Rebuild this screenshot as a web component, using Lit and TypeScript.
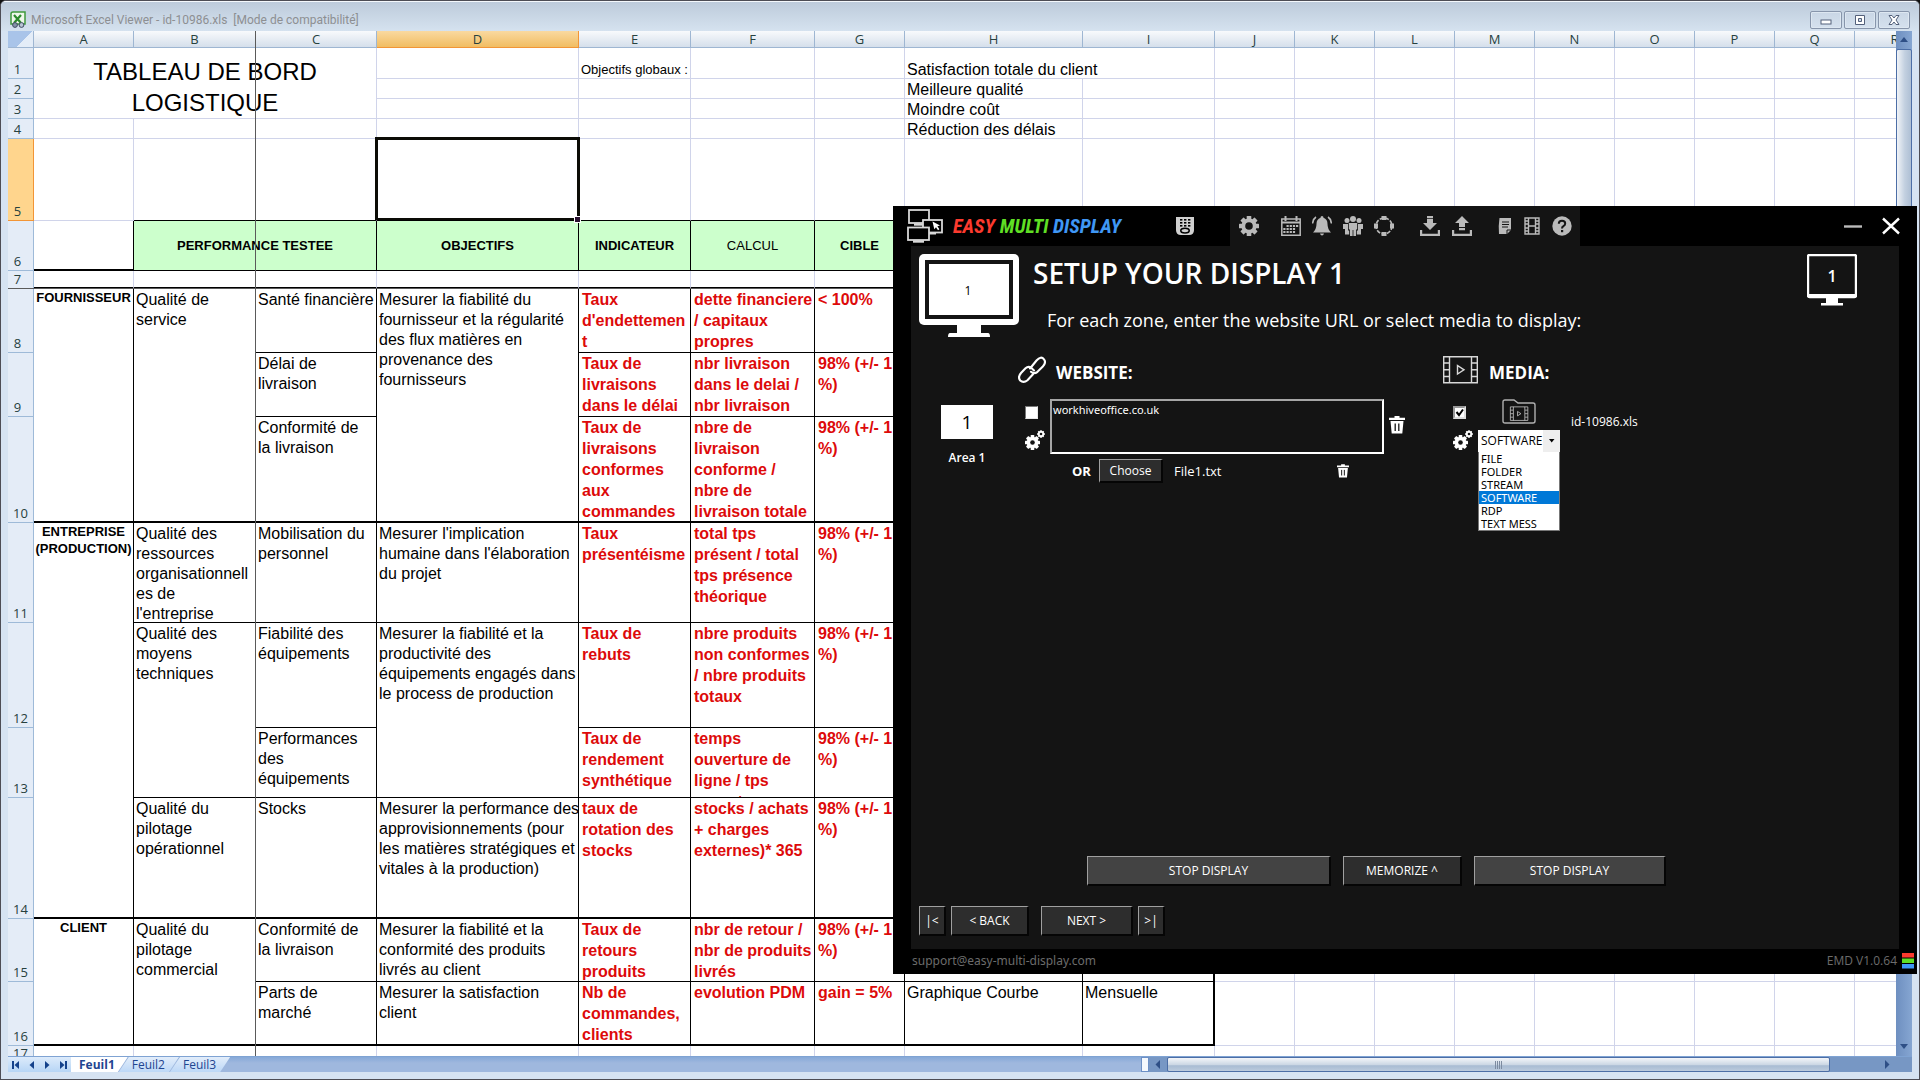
import { LitElement, html, css, svg, nothing, TemplateResult } from "lit";
import { customElement, state } from "lit/decorators.js";
import { classMap } from "lit/directives/class-map.js";
import { styleMap } from "lit/directives/style-map.js";

/* ---------- Workbook data ---------- */

interface Cell {
  t?: string;
  k?: string;
  cs?: number;
  rs?: number;
}
interface Row {
  h: number;
  cells: Cell[];
}

const COLUMNS: [string, number][] = [
  ["A", 100], ["B", 122], ["C", 121], ["D", 202], ["E", 112], ["F", 124], ["G", 90], ["H", 178], ["I", 132],
  ["J", 80], ["K", 80], ["L", 80], ["M", 80], ["N", 80], ["O", 80], ["P", 80], ["Q", 80], ["R", 80],
];

const blank = (n: number, k = ""): Cell[] => Array.from({ length: n }, () => ({ k }));
const tail = blank(9);
const TARGET = "98% (+/- 1\n%)";

const ROWS: Row[] = [
  { h: 31, cells: [{ t: "TABLEAU DE BORD\nLOGISTIQUE", k: "title", cs: 3, rs: 3 }, {}, { t: "Objectifs globaux :", k: "low small" }, {}, {}, { t: "Satisfaction totale du client", k: "low", cs: 2 }, ...tail] },
  { h: 20, cells: [...blank(4), { t: "Meilleure qualité", k: "low" }, {}, ...tail] },
  { h: 20, cells: [...blank(4), { t: "Moindre coût", k: "low" }, {}, ...tail] },
  { h: 20, cells: [...blank(7), { t: "Réduction des délais", k: "low" }, {}, ...tail] },
  { h: 82, cells: [{}, ...blank(2, "kb"), { k: "kb active" }, ...blank(5, "kb"), ...tail] },
  { h: 50, cells: [{ k: "kr thick" }, { t: "PERFORMANCE TESTEE", k: "head", cs: 2 }, { t: "OBJECTIFS", k: "head" }, { t: "INDICATEUR", k: "head" }, { t: "CALCUL", k: "head light" }, { t: "CIBLE", k: "head" }, { k: "head" }, { k: "head" }, ...tail] },
  { h: 18, cells: [...blank(9, "thick"), ...tail] },
  { h: 64, cells: [{ t: "FOURNISSEUR", k: "k actor thick", rs: 3 }, { t: "Qualité de\nservice", k: "k thick", rs: 3 }, { t: "Santé financière", k: "k" }, { t: "Mesurer la fiabilité du\nfournisseur et la régularité\ndes flux matières en\nprovenance des\nfournisseurs", k: "k thick", rs: 3 }, { t: "Taux\nd'endettemen\nt", k: "k red" }, { t: "dette financiere\n/ capitaux\npropres", k: "k red" }, { t: "< 100%", k: "k red" }, { k: "k" }, { k: "k edge" }, ...tail] },
  { h: 64, cells: [{ t: "Délai de\nlivraison", k: "k" }, { t: "Taux de\nlivraisons\ndans le délai", k: "k red" }, { t: "nbr livraison\ndans le delai /\nnbr livraison", k: "k red" }, { t: TARGET, k: "k red" }, { k: "k" }, { k: "k edge" }, ...tail] },
  { h: 106, cells: [{ t: "Conformité de\nla livraison", k: "k thick" }, { t: "Taux de\nlivraisons\nconformes\naux\ncommandes", k: "k thick red" }, { t: "nbre de\nlivraison\nconforme /\nnbre de\nlivraison totale", k: "k thick red" }, { t: TARGET, k: "k thick red" }, { k: "k thick" }, { k: "k thick edge" }, ...tail] },
  { h: 100, cells: [{ t: "ENTREPRISE\n(PRODUCTION)", k: "k actor thick", rs: 4 }, { t: "Qualité des\nressources\norganisationnell\nes de\nl'entreprise", k: "k" }, { t: "Mobilisation du\npersonnel", k: "k" }, { t: "Mesurer l'implication\nhumaine dans l'élaboration\ndu projet", k: "k" }, { t: "Taux\nprésentéisme", k: "k red" }, { t: "total tps\nprésent / total\ntps présence\nthéorique", k: "k red" }, { t: TARGET, k: "k red" }, { k: "k" }, { k: "k edge" }, ...tail] },
  { h: 105, cells: [{ t: "Qualité des\nmoyens\ntechniques", k: "k", rs: 2 }, { t: "Fiabilité des\néquipements", k: "k" }, { t: "Mesurer la fiabilité et la\nproductivité des\néquipements engagés dans\nle process de production", k: "k", rs: 2 }, { t: "Taux de\nrebuts", k: "k red" }, { t: "nbre produits\nnon conformes\n/ nbre produits\ntotaux", k: "k red" }, { t: TARGET, k: "k red" }, { k: "k" }, { k: "k edge" }, ...tail] },
  { h: 70, cells: [{ t: "Performances\ndes\néquipements", k: "k" }, { t: "Taux de\nrendement\nsynthétique", k: "k red" }, { t: "temps\nouverture de\nligne / tps\nouverture", k: "k red" }, { t: TARGET, k: "k red" }, { k: "k" }, { k: "k edge" }, ...tail] },
  { h: 121, cells: [{ t: "Qualité du\npilotage\nopérationnel", k: "k thick" }, { t: "Stocks", k: "k thick" }, { t: "Mesurer la performance des\napprovisionnements (pour\nles matières stratégiques et\nvitales à la production)", k: "k thick" }, { t: "taux de\nrotation des\nstocks", k: "k thick red" }, { t: "stocks / achats\n+ charges\nexternes)* 365", k: "k thick red" }, { t: TARGET, k: "k thick red" }, { k: "k thick" }, { k: "k thick edge" }, ...tail] },
  { h: 63, cells: [{ t: "CLIENT", k: "k actor thick", rs: 2 }, { t: "Qualité du\npilotage\ncommercial", k: "k thick", rs: 2 }, { t: "Conformité de\nla livraison", k: "k" }, { t: "Mesurer la fiabilité et la\nconformité des produits\nlivrés au client", k: "k" }, { t: "Taux de\nretours\nproduits", k: "k red" }, { t: "nbr de retour /\nnbr de produits\nlivrés", k: "k red" }, { t: TARGET, k: "k red" }, { k: "k" }, { k: "k edge" }, ...tail] },
  { h: 64, cells: [{ t: "Parts de\nmarché", k: "k thick" }, { t: "Mesurer la satisfaction\nclient", k: "k thick" }, { t: "Nb de\ncommandes,\nclients", k: "k thick red" }, { t: "evolution PDM", k: "k thick red" }, { t: "gain = 5%", k: "k thick red" }, { t: "Graphique Courbe", k: "k thick" }, { t: "Mensuelle", k: "k thick edge" }, ...tail] },
  { h: 17, cells: [...blank(9), ...tail] },
];

/* ---------- Icons ---------- */

const teeth = (cx: number, cy: number, r: number, w: number, n: number) =>
  Array.from({ length: n }, (_, i) => svg`<rect x=${cx - w / 2} y=${cy - r} width=${w} height=${r} rx="0.6" transform="rotate(${(i * 360) / n} ${cx} ${cy})"/>`);

const gear = (hole: string) => svg`
  <g fill="currentColor">${teeth(10, 10, 10, 4.6, 8)}<circle cx="10" cy="10" r="7.6"/></g>
  <circle cx="10" cy="10" r="3.8" fill=${hole}/>`;

const icon = (w: number, h: number, body: unknown) =>
  html`<svg width=${w} height=${h} viewBox="0 0 ${w} ${h}" aria-hidden="true">${body}</svg>`;

const remote = icon(20, 20, svg`
  <path d="M1 1h18v13q0 5-5 5H6q-5 0-5-5z" fill="#d0d0d0"/>
  <g fill="#000"><rect x="5" y="3" width="2.4" height="1.6"/><rect x="9" y="3" width="2.4" height="1.6"/><rect x="13" y="3" width="2.4" height="1.6"/>
  <rect x="5" y="6" width="2.4" height="1.6"/><rect x="9" y="6" width="2.4" height="1.6"/><rect x="13" y="6" width="2.4" height="1.6"/>
  <rect x="5" y="9" width="2.4" height="1.6"/><rect x="9" y="9" width="2.4" height="1.6"/><rect x="13" y="9" width="2.4" height="1.6"/></g>
  <ellipse cx="10" cy="14.6" rx="4.2" ry="2.4" fill="#d0d0d0" stroke="#000" stroke-width="1.6"/>`);

const calendar = icon(20, 20, svg`
  <path d="M0.8 3h18.4v16.2H0.8z" fill="none" stroke="currentColor" stroke-width="1.5"/>
  <path d="M0.8 6.5h18.4" stroke="currentColor" stroke-width="2"/>
  <path d="M4.5 0v5M15.5 0v5" stroke="currentColor" stroke-width="2"/>
  <g fill="currentColor">${[[6.5, 9], [9.7, 9], [12.9, 9], [16, 9], [3.3, 12], [6.5, 12], [9.7, 12], [12.9, 12], [3.3, 15], [6.5, 15], [9.7, 15], [12.9, 15]].map(([x, y]) => svg`<rect x=${x - 1} y=${y} width="2.2" height="2"/>`)}</g>`);

const bell = icon(20, 20, svg`
  <path d="M10 0q1.500 0 1.500 1.700Q15.500 3 15.500 8q0 5 3.500 8.500H1Q4.500 13 4.500 8q0-5 4-6.300Q8.500 0 10 0z" fill="currentColor"/>
  <path d="M8 17.500h4q-.5 2-2 2t-2-2z" fill="currentColor"/>
  <path d="M4 1Q.9 3 .6 7.500M16 1q3.100 2 3.400 6.500" fill="none" stroke="currentColor" stroke-width="1.500"/>`);

const people = icon(20, 20, svg`
  <g fill="currentColor"><circle cx="10" cy="3" r="3"/><circle cx="4" cy="4.500" r="2.500"/><circle cx="16" cy="4.500" r="2.500"/>
  <path d="M5.800 7h8.400v6.500h-1.200V20h-2.600v-6h-.8v6H7v-6.500H5.800z"/>
  <path d="M0 8h5v6.500h1.200V18.500H2V13H0zM20 8h-5v6.500h-1.200v4H18V13h2z"/></g>`);

const ring = icon(20, 20, svg`
  <circle cx="10" cy="10" r="8" fill="none" stroke="currentColor" stroke-width="1.600" stroke-dasharray="4 1.500"/>
  <g fill="currentColor"><rect x="7.500" y="0" width="5" height="4"/><rect x="7.500" y="16" width="5" height="4"/><rect x="0" y="7.500" width="4" height="5"/><rect x="16" y="7.500" width="4" height="5"/></g>`);

const download = icon(20, 20, svg`<path d="M7 0h6v2.200H7zM7 3h6v4h4l-7 7-7-7h4zM0 14h2.200v3.800h15.600V14H20v6H0z" fill="currentColor"/>`);
const upload = icon(20, 20, svg`<path d="M10 0l7 7h-4v4H7V7H3zM7 12h6v2.200H7zM0 14h2.200v3.800h15.600V14H20v6H0z" fill="currentColor"/>`);
const note = icon(14, 18, svg`<path d="M1.500 1H13v12l-4 4H1q-.8-8 .5-16z" fill="currentColor"/><path d="M4 5h7M4 7.500h7M4 10h6M9 17v-4h4" stroke="#141414" stroke-width="1" fill="none"/>`);
const film = icon(16, 18, svg`
  <path d="M1 1h14v16H1zM4.500 1v16M11.500 1v16M4.500 9h7" fill="none" stroke="currentColor" stroke-width="1.400"/>
  <path d="M1 4h3.500M1 7h3.500M1 11h3.500M1 14h3.500M11.500 4H15M11.500 7H15M11.500 11H15M11.500 14H15" stroke="currentColor" stroke-width="1.600"/>`);
const help = icon(20, 20, svg`
  <circle cx="10" cy="10" r="9.700" fill="currentColor"/>
  <path d="M6.800 7.800Q6.800 4.800 10 4.800t3.200 2.700q0 1.600-1.800 2.700Q10 11 10 12.600" fill="none" stroke="#141414" stroke-width="2"/>
  <rect x="9" y="14" width="2.200" height="2.200" fill="#141414"/>`);

const logoMark = icon(36, 34, svg`
  <g fill="#000" stroke="#d8d8d8" stroke-width="1.800">
    <rect x="2" y="1" width="20" height="13"/><path d="M7 15.500h9" stroke-width="2.400"/>
    <rect x="16" y="11" width="19" height="12.500"/><path d="M22 24.500h7" stroke-width="2"/>
    <rect x="1" y="18.500" width="21" height="12.500"/><path d="M6 32.500h11" stroke-width="2.400"/>
  </g>
  <path d="M25.500 12.500l7.500 4-2.600.8 2 3-1.400.9-2-3-1.700 2z" fill="#fff"/>`);

const bigMonitor = svg`
  <rect width="100" height="71" rx="5" fill="#fff"/><rect x="6" y="6" width="88" height="59" fill="#141414"/>
  <rect x="10" y="10" width="80" height="51" fill="#fff"/>
  <path d="M38 71h24v8h7q2 0 2 4H29q0-4 2-4h7z" fill="#fff"/>`;
const smallMonitor = svg`
  <rect x="1" y="1" width="48" height="42" rx="1.500" fill="none" stroke="#fff" stroke-width="2.400"/>
  <path d="M1 40h48v3.500H1zM19 43h12v6h5v2.500H14V49h5z" fill="#fff"/>`;

const link = icon(28, 28, svg`
  <g fill="none" stroke="#fff" stroke-width="2.100" stroke-linecap="round">
    <path d="M12 12.500l6.500-8q4.500-5 7.500-1.200 2.500 3.200-1.200 7.200l-5.300 5.300q-3.500 2.700-6.500 0"/>
    <path d="M16 14.500l-3-3q-3-1.500-5.500.8L3 17q-3.500 4-.8 7.500 3.300 3 7.300-.3l5.500-6"/>
  </g>`);

const gears = icon(20, 20, svg`
  <g fill="#fff">${teeth(7.500, 12.500, 7.500, 3.600, 8)}<circle cx="7.500" cy="12.500" r="5.800"/>${teeth(16, 4, 3.800, 2, 8)}<circle cx="16" cy="4" r="2.800"/></g>
  <circle cx="7.500" cy="12.500" r="2.300" fill="#141414"/><circle cx="16" cy="4" r="1.300" fill="#141414"/>`);

const trashShape = svg`<path d="M5.500 0h5v1.800H16V4H0V1.800h5.500zM1.500 5h13L13.300 17.500H2.700z" fill="#fff"/><path d="M6.200 7.500v7.500M9.800 7.500v7.500" stroke="#141414" stroke-width="1.300"/>`;
const trash = (w: number, h: number) => html`<svg width=${w} height=${h} viewBox="0 0 16 18" aria-hidden="true">${trashShape}</svg>`;

const filmPlay = svg`
  <path d="M.7.7h33.600v26.100H.7zM6.500.7v26.100M28.500.7v26.100" fill="none" stroke="#d8d8d8" stroke-width="1.400"/>
  <path d="M1 7h5M1 13.800h5M1 20.500h5M29 7h5M29 13.800h5M29 20.500h5" stroke="#d8d8d8" stroke-width="1.400"/>
  <path d="M14.500 9.500v8.500l6.500-4.200z" fill="none" stroke="#d8d8d8" stroke-width="1.400"/>`;
const folder = icon(34, 25, svg`
  <path d="M1 22V3q0-2 2-2h9l4 3h15q2 0 2 2v16q0 2-2 2H3q-2 0-2-2z" fill="none" stroke="#b0b0b0" stroke-width="1.400"/>
  <g transform="translate(8 7.500) scale(.52)">${filmPlay}</g>`);

const bookIcon = icon(17, 17, svg`
  <path d="M1 3q0-2 2-2h12v12H1z" fill="#eef7ea" stroke="#3f9a3c" stroke-width="1.500"/>
  <path d="M4 4l7 8M11 4l-7 8" stroke="#2c8a2c" stroke-width="2.200"/>
  <circle cx="5" cy="14" r="2.400" fill="#8593a8" stroke="#3d4a60"/><circle cx="11.500" cy="14" r="2.400" fill="#b9c4d4" stroke="#3d4a60"/>`);

/* ---------- Spreadsheet window ---------- */

@customElement("sheet-window")
class SheetWindow extends LitElement {
  static styles = css`
    :host { display: flex; flex-direction: column; height: 100%; box-sizing: border-box; border: 1px solid #4d4d55; border-radius: 6px 6px 0 0; background: #d6e3f2; font-family: "Liberation Sans", Arial, sans-serif; overflow: hidden; }
    * { box-sizing: border-box; }
    .bar { display: flex; align-items: center; height: 30px; flex: none; padding: 6px 9px 0 9px; gap: 4px; border-top: 1px solid #f4f8fc; background: linear-gradient(#bdcbdb, #d5e2ef); font: 12px/16px Roboto, sans-serif; color: #8d8f92; white-space: pre; }
    .bar h1 { flex: 1; margin: 0; font: inherit; }
    .winbtns { display: flex; gap: 2px; }
    .winbtns button { display: grid; place-items: center; width: 32px; height: 18px; padding: 0; border: 1px solid #8795ab; border-radius: 2px; background: linear-gradient(#c9d6e5, #d5e1ee); box-shadow: inset 0 0 0 1px #dde7f1; }
    .body { flex: 1; min-height: 0; display: flex; margin: 0 7px; }
    .grid { position: relative; flex: 1; min-width: 0; overflow: hidden; background: #fff; }
    table { table-layout: fixed; border-collapse: separate; border-spacing: 0; font-size: 16px; line-height: 20px; color: #000; }
    th, td { padding: 0; vertical-align: top; text-align: left; font-weight: 400; border: 0 solid #d0d4ea; border-width: 0 1px 1px 0; }
    thead th { height: 17px; text-align: center; font: 13px/16px "Open Sans", sans-serif; color: #27413e; background: linear-gradient(#f8fafc, #d5dfeb); border-color: #9eb6d2; }
    thead th.corner { background: linear-gradient(135deg, #a9c4e9 60%, #e4edf8 60%); }
    th.row { vertical-align: bottom; text-align: center; font: 13px/15px "Open Sans", sans-serif; color: #27413e; background: #e4ecf7; border-color: #9ebad8; padding: 0 6px 1px 0; }
    th.row.two { padding-right: 0; }
    thead th.on { background: linear-gradient(#f9d9a0, #f1bd62); border-color: #f29536; }
    th.row.on { background: #ffd58d; border-color: #f29536; }
    .c { overflow: hidden; padding: 1px 0 0 2px; white-space: pre; }
    .title { vertical-align: bottom; text-align: center; font-size: 24px; line-height: 31px; }
    .low { vertical-align: bottom; }
    .low .c { line-height: 16px; overflow: visible; }
    .small { font-size: 13px; }
    .k { border-color: #000; }
    .kb { border-bottom-color: #000; }
    .kr { border-right-color: #000; }
    .thick { border-bottom: 2px solid #000; }
    .edge { border-right: 2px solid #000; }
    .red { color: #dd0a0a; font-weight: 700; line-height: 21px; }
    .red .c { padding: 0 0 0 3px; }
    .actor { text-align: center; font-size: 13px; line-height: 17px; font-weight: 700; }
    .actor .c, .head .c { padding: 0; }
    .title .c { padding: 1px 0 0; }
    .head { vertical-align: middle; text-align: center; font-size: 13px; font-weight: 700; background: #ccffcc; border-color: #000; }
    .light { font-weight: 400; }
    .active { position: relative; }
    .active::after { content: ""; position: absolute; inset: -2px -2px 0 -2px; border: 3px solid #0c0c06; border-bottom-width: 2px; z-index: 1; }
    .active::before { content: ""; position: absolute; right: -3px; bottom: -3px; width: 5px; height: 5px; border: 1px solid #fff; background: #2a1030; z-index: 2; }
    .freeze { position: absolute; background: #5a5a5a; }
    .freeze.v { top: 0; bottom: 0; left: 247px; width: 1px; }
    .freeze.h { left: 0; right: 0; top: 257px; height: 1px; }
    .vscroll { display: flex; flex-direction: column; flex: none; width: 16px; background: linear-gradient(90deg, #6e8fc0, #86a6d2); }
    .vscroll svg { flex: none; }
    .vthumb { height: 60%; border: 1px solid #4c6ea6; border-radius: 2px; background: linear-gradient(90deg, #f1f4f8, #c3d0e0 55%, #aebfd4); }
    .grow { flex: 1; }
    .foot { display: flex; flex: none; height: 16px; margin: 0 7px 7px; font: 12px/15px "Open Sans", sans-serif; background: linear-gradient(#86a9d8, #9fb8de 40%); border-top: 1px solid #7fa3d3; }
    .navs { display: flex; width: 63px; background: linear-gradient(#dcebfb, #b7d5f5); }
    .navs button { flex: 1; padding: 0; border: 0; background: none; color: #15428b; display: grid; place-items: center; }
    .tab { position: relative; display: block; height: 15px; margin-right: -9px; color: #1f4590; text-decoration: none; background: linear-gradient(#e2edfa, #bdd8f7); clip-path: polygon(10px 0, 100% 0, calc(100% - 10px) 100%, 0 100%); }
    .tab.next { padding: 0 14px 0 13px; }
    .tab.on { font-weight: 700; background: #fff; clip-path: polygon(0 0, 100% 0, calc(100% - 10px) 100%, 0 100%); padding: 0 13px 0 8px; }
    .hscroll { display: flex; width: 771px; max-width: 50%; padding-right: 16px; background: #7797c4; }
    .split { width: 8px; background: #f4f8fd; border: 1px solid #6c90c6; }
    .hthumb { flex: 1; margin-right: 50px; margin-left: 2px; display: grid; place-items: center; border: 1px solid #4c6ea6; border-radius: 2px; background: linear-gradient(#f4f6f9, #cdd8e5 50%, #a9bcd3 60%, #bccbdd); }
  `;

  private cell(c: Cell, h: number) {
    const line = (c.k ?? "").includes("thick") ? 2 : 1;
    const limit = c.rs || !c.t ? nothing : styleMap({ maxHeight: `${h - line}px` });
    return html`<td class=${c.k ?? ""} colspan=${c.cs ?? 1} rowspan=${c.rs ?? 1}>${c.t ? html`<div class="c" style=${limit as never}>${c.t}</div>` : nothing}</td>`;
  }

  render() {
    const total = COLUMNS.reduce((s, [, w]) => s + w, 26);
    const arrow = (d: string) => icon(10, 10, svg`<path d=${d} fill="currentColor"/>`);
    return html`
      <header class="bar">
        ${bookIcon}
        <h1>Microsoft Excel Viewer - id-10986.xls  [Mode de compatibilité]</h1>
        <div class="winbtns">
          <button aria-label="Réduire">${icon(14, 12, svg`<rect x="2" y="6" width="10" height="4" fill="#fff" stroke="#53607a"/>`)}</button>
          <button aria-label="Restaurer">${icon(14, 12, svg`<path d="M2.500 1.500h9v9h-9zM5.500 4.500v3h3v-3z" fill="#fff" fill-rule="evenodd" stroke="#53607a"/>`)}</button>
          <button aria-label="Fermer">${icon(14, 12, svg`<path d="M2 1.500h3l2 2.500 2-2.500h3L9 6l3 4.500H9L7 8l-2 2.500H2L5 6z" fill="#fff" stroke="#53607a"/>`)}</button>
        </div>
      </header>
      <div class="body">
        <div class="grid">
          <table style=${styleMap({ width: `${total}px` })}>
            <colgroup><col style="width:26px">${COLUMNS.map(([, w]) => html`<col style=${styleMap({ width: `${w}px` })}>`)}</colgroup>
            <thead><tr><th class="corner"></th>${COLUMNS.map(([n]) => html`<th scope="col" class=${n === "D" ? "on" : ""}>${n}</th>`)}</tr></thead>
            <tbody>
              ${ROWS.map((r, i) => html`<tr style=${styleMap({ height: `${r.h}px` })}>
                <th scope="row" class=${classMap({ row: true, on: i === 4, two: i > 8 })}>${i + 1}</th>
                ${r.cells.map((c) => this.cell(c, r.h))}
              </tr>`)}
            </tbody>
          </table>
          <div class="freeze v"></div><div class="freeze h"></div>
        </div>
        <div class="vscroll">
          ${icon(16, 18, svg`<path d="M8 6l4 5H4z" fill="#2e4f86"/>`)}
          <div class="vthumb"></div><div class="grow"></div>
          ${icon(16, 18, svg`<path d="M8 11l4-5H4z" fill="#2e4f86"/>`)}
        </div>
      </div>
      <footer class="foot">
        <div class="navs">
          <button aria-label="Première feuille">${arrow("M1 1h2v8H1zM8 1v8L3.500 5z")}</button>
          <button aria-label="Feuille précédente">${arrow("M7 1v8L2.500 5z")}</button>
          <button aria-label="Feuille suivante">${arrow("M3 1v8l4.500-4z")}</button>
          <button aria-label="Dernière feuille">${arrow("M2 1v8l4.500-4zM7 1h2v8H7z")}</button>
        </div>
        <a class="tab on" href="#feuil1">Feuil1</a>
        <a class="tab next" href="#feuil2">Feuil2</a>
        <a class="tab next" href="#feuil3">Feuil3</a>
        <div class="grow"></div>
        <div class="hscroll">
          <div class="split"></div>
          ${icon(16, 15, svg`<path d="M11 3v9L6.500 7.500z" fill="#2e4f86"/>`)}
          <div class="hthumb">${icon(10, 8, svg`<path d="M1.500 0v8M3.500 0v8M5.500 0v8M7.500 0v8" stroke="#7d8ba0"/>`)}</div>
          ${icon(16, 15, svg`<path d="M5 3v9l4.500-4.500z" fill="#2e4f86"/>`)}
        </div>
      </footer>
    `;
  }
}

/* ---------- Display manager window ---------- */

const MEDIA_KINDS = ["FILE", "FOLDER", "STREAM", "SOFTWARE", "RDP", "TEXT MESS"];

@customElement("display-manager")
class DisplayManager extends LitElement {
  @state() private kind = "SOFTWARE";

  static styles = css`
    :host { display: grid; grid-template: 40px 1fr 25px / 18px 1fr 18px; box-sizing: border-box; background: #000; color: #fff; font-family: "Open Sans", sans-serif; font-size: 12px; line-height: 16px; }
    * { box-sizing: border-box; }
    svg { display: block; flex: none; }
    button { font: inherit; color: inherit; }
    .top { grid-column: 1 / -1; display: flex; align-items: stretch; }
    .brand { display: flex; align-items: center; gap: 10px; width: 337px; padding-left: 14px; }
    .logo { flex: 1; font: italic 700 20px/24px "Roboto Condensed", Roboto, sans-serif; white-space: nowrap; }
    .r { color: #fb3a2e; } .g { color: #5fdf24; } .b { color: #3f97f5; }
    .ico { display: grid; place-items: center; padding: 0; border: 0; background: none; color: #bababa; }
    .brand .ico { margin-right: 35px; }
    .tools { display: flex; align-items: center; width: 350px; padding: 0 9px 0 9px; background: #141414; }
    .set { display: flex; gap: 11px; margin-left: 22px; }
    .set.wide, .set.docs { gap: 12px; margin-left: 26px; align-items: center; }
    .win { display: flex; flex: 1; justify-content: flex-end; align-items: center; gap: 18px; padding-right: 16px; }
    .panel { grid-column: 2; display: flex; flex-direction: column; background: #141414; padding: 8px 8px 13px 8px; }
    .intro { display: flex; }
    .screen { position: relative; width: 100px; height: 83px; }
    .screen span { position: absolute; inset: 10px 10px 20px 8px; display: grid; place-items: center; color: #000; }
    .mini { position: relative; width: 50px; height: 52px; margin-right: 34px; }
    .mini span { position: absolute; inset: 0 0 8px 0; display: grid; place-items: center; font-size: 16px; font-weight: 600; }
    .words { flex: 1; padding-left: 14px; }
    h2 { margin: 0; font-size: 28px; line-height: 38px; font-weight: 600; }
    .words p { margin: 16px 0 0 14px; font-size: 18px; line-height: 24px; }
    .zone { display: grid; grid-template-columns: 99px 425px 1fr; row-gap: 14px; margin-top: 17px; }
    h3 { margin: 0; display: flex; align-items: center; gap: 10px; font-size: 17px; line-height: 30px; font-weight: 700; height: 31px; }
    h3.site { grid-column: 2; }
    h3 span { padding-top: 6px; }
    .area { display: flex; flex-direction: column; gap: 11px; width: 52px; margin: 6px 0 0 22px; font-weight: 600; text-align: center; white-space: nowrap; }
    .area div { height: 34px; display: grid; place-items: center; background: #fff; color: #000; font-size: 19px; font-weight: 400; }
    .line { display: flex; }
    .side { display: flex; flex-direction: column; align-items: flex-start; gap: 11px; width: 25px; padding-top: 7px; }
    input[type="checkbox"] { appearance: none; display: block; width: 13px; height: 13px; margin: 0; background: #fff; border: 1px solid; border-color: #777 #e8e8e8 #e8e8e8 #777; }
    input[type="checkbox"]:checked { border-width: 2px; border-color: #999 #ddd #ddd #999; }
    .tick { position: relative; display: block; width: 13px; }
    .tick svg { position: absolute; inset: 0; pointer-events: none; }
    .website { padding-left: 7px; }
    textarea { flex: none; width: 334px; height: 55px; padding: 1px; resize: none; color: #fff; background: #141414; border: 2px solid; border-color: #a6a6a6 #fff #fff #a6a6a6; border-radius: 0; font: 11px/16px "Noto Sans", sans-serif; }
    .del { margin: 17px 0 0 5px; align-self: flex-start; }
    .alt { display: flex; align-items: center; margin-top: 5px; padding-left: 47px; }
    .alt b { font-size: 13px; width: 27px; }
    .alt label { flex: 1; margin-left: 11px; font-size: 13px; }
    .alt .ico { margin-right: 94px; }
    .btn { height: 30px; padding: 0; background: #2d2d2d; border: 1px solid; border-color: #a0a0a0 #050505 #050505 #a0a0a0; border-right-width: 2px; border-bottom-width: 2px; font-size: 12px; line-height: 16px; white-space: pre; }
    .btn.choose { width: 64px; height: 24px; }
    .btn.main { background: #434343; }
    .media { padding-left: 10px; }
    .pick { width: 82px; }
    .pick .ico { margin: 0 auto; }
    .combo { position: relative; margin-top: 6px; }
    select { display: block; width: 82px; height: 22px; padding: 0 0 0 3px; appearance: none; border: 0; border-radius: 0; color: #000; font: 12px/20px "Open Sans", sans-serif; background: linear-gradient(90deg, #fff 65px, #eee 65px); }
    .combo svg { position: absolute; right: 5px; top: 9px; pointer-events: none; }
    ul { position: absolute; top: 22px; left: 0; right: 0; margin: 0; padding: 0; list-style: none; background: #fff; border: 1px solid #777; border-top: 0; color: #000; font: 11px/13px "Noto Sans", sans-serif; }
    li { padding-left: 2px; height: 13px; white-space: nowrap; }
    li[aria-selected="true"] { background: #0078d7; color: #fff; }
    .name { margin: 15px 0 0 11px; font-size: 12px; }
    .fill { flex: 1; }
    .main-row { display: flex; gap: 12px; padding-left: 168px; }
    .nav-row { display: flex; gap: 5px; margin-top: 20px; }
    .w27 { width: 27px; } .w77 { width: 78px; } .w91 { width: 92px; margin-left: 7px; }
    .w243 { width: 244px; } .w120 { width: 119px; } .w192 { width: 192px; }
    .bottom { grid-column: 1 / -1; display: flex; align-items: center; justify-content: space-between; padding: 0 3px 2px 19px; font-size: 12px; color: #6c6c6c; }
    .bottom a { color: inherit; text-decoration: none; font-family: "Noto Sans", sans-serif; }
    .ver { display: flex; align-items: center; gap: 5px; }
  `;

  private tool(label: string, body: TemplateResult) {
    return html`<button class="ico" aria-label=${label}>${body}</button>`;
  }

  render() {
    return html`
      <header class="top">
        <div class="brand">
          ${logoMark}
          <div class="logo"><span class="r">EASY</span> <span class="g">MULTI</span> <span class="b">DISPLAY</span></div>
          ${this.tool("Remote", remote)}
        </div>
        <nav class="tools">
          ${this.tool("Settings", icon(20, 20, gear("#141414")))}
          <div class="set">${this.tool("Calendar", calendar)}${this.tool("Alerts", bell)}${this.tool("Users", people)}${this.tool("Network", ring)}</div>
          <div class="set wide">${this.tool("Import", download)}${this.tool("Export", upload)}</div>
          <div class="set docs">${this.tool("Notes", note)}${this.tool("Videos", film)}${this.tool("Help", help)}</div>
        </nav>
        <div class="win">
          ${this.tool("Minimize", icon(20, 18, svg`<path d="M1 9.500h18" stroke="#bbb" stroke-width="2.400"/>`))}
          ${this.tool("Close", icon(20, 18, svg`<path d="M2 1.500l16 15M18 1.500l-16 15" stroke="#fff" stroke-width="2.400"/>`))}
        </div>
      </header>
      <main class="panel">
        <section class="intro">
          <div class="screen">${icon(100, 83, bigMonitor)}<span>1</span></div>
          <div class="words">
            <h2>SETUP YOUR DISPLAY 1</h2>
            <p>For each zone, enter the website URL or select media to display:</p>
          </div>
          <div class="mini">${icon(50, 52, smallMonitor)}<span>1</span></div>
        </section>
        <section class="zone">
          <h3 class="site">${link}<span>WEBSITE:</span></h3>
          <h3>${icon(36, 28, filmPlay)}<span>MEDIA:</span></h3>
          <div class="area"><div>1</div>Area 1</div>
          <div class="website">
            <div class="line">
              <div class="side"><input type="checkbox" aria-label="Use website">${this.tool("Website options", gears)}</div>
              <textarea aria-label="Website URL" spellcheck="false" .value=${"workhiveoffice.co.uk"}></textarea>
              <button class="ico del" aria-label="Clear URL">${trash(16, 18)}</button>
            </div>
            <div class="alt">
              <b>OR</b>
              <button class="btn choose" id="choose">Choose</button>
              <label for="choose">File1.txt</label>
              ${this.tool("Remove file", trash(12, 14))}
            </div>
          </div>
          <div class="media line">
            <div class="side">
              <span class="tick"><input type="checkbox" aria-label="Use media" checked>${icon(13, 13, svg`<path d="M3.500 6l2.500 3 4-5.500" fill="none" stroke="#000" stroke-width="2"/>`)}</span>
              ${this.tool("Media options", gears)}
            </div>
            <div class="pick">
              ${this.tool("Browse media", folder)}
              <div class="combo">
                <select aria-label="Media type" .value=${this.kind} @change=${(e: Event) => (this.kind = (e.target as HTMLSelectElement).value)}>
                  ${MEDIA_KINDS.map((k) => html`<option ?selected=${k === this.kind}>${k}</option>`)}
                </select>
                ${icon(7, 5, svg`<path d="M1 0h5.500L3.700 3.500z" fill="#000"/>`)}
                <ul role="listbox" aria-label="Media types">
                  ${MEDIA_KINDS.map((k) => html`<li role="option" aria-selected=${k === this.kind ? "true" : "false"} @click=${() => (this.kind = k)}>${k}</li>`)}
                </ul>
              </div>
            </div>
            <div class="name">id-10986.xls</div>
          </div>
        </section>
        <div class="fill"></div>
        <div class="main-row">
          <button class="btn main w243">STOP DISPLAY</button>
          <button class="btn w120">MEMORIZE ^</button>
          <button class="btn main w192">STOP DISPLAY</button>
        </div>
        <div class="nav-row">
          <button class="btn w27" aria-label="First">|&lt;</button>
          <button class="btn w77">&lt; BACK</button>
          <button class="btn w91">NEXT &gt;</button>
          <button class="btn w27" aria-label="Last">&gt;|</button>
        </div>
      </main>
      <footer class="bottom">
        <a href="mailto:support@easy-multi-display.com">support@easy-multi-display.com</a>
        <div class="ver">EMD V1.0.64 ${icon(12, 16, svg`<rect width="12" height="4.500" fill="#fb3a2e"/><rect y="5.500" width="12" height="4.500" fill="#5fdf24"/><rect y="11" width="12" height="4.500" fill="#3f97f5"/>`)}</div>
      </footer>
    `;
  }
}

@customElement("app-root")
class AppRoot extends LitElement {
  static styles = css`
    :host { display: block; position: relative; height: 100vh; overflow: hidden; background: #111; }
    .float { position: absolute; right: 3px; top: 206px; width: 1024px; height: 768px; }
  `;
  render() {
    return html`<sheet-window></sheet-window><display-manager class="float"></display-manager>`;
  }
}
